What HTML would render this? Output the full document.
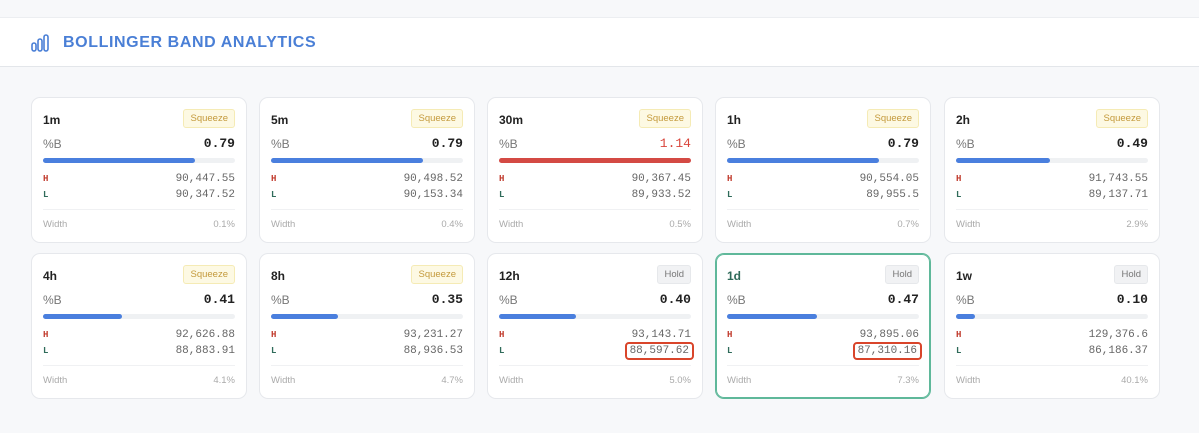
<!DOCTYPE html>
<html><head><meta charset="utf-8"><style>
*{box-sizing:border-box;margin:0;padding:0}
body{width:1199px;height:433px;background:#f7f8fa;font-family:"Liberation Sans",sans-serif;position:relative;overflow:hidden}
.hdr{position:absolute;left:0;top:17px;width:1199px;height:50px;background:#fff;border-top:1px solid #eceef1;border-bottom:1px solid #e3e6ea}
.hdr svg{position:absolute;left:31px;top:16px}
.hdr h1{position:absolute;left:63px;top:16px;font-size:16px;font-weight:bold;color:#4a7fd6;letter-spacing:0.6px}
.card{position:absolute;width:216px;height:146px;background:#fff;border:1px solid #e6e8ec;border-radius:9px}
.card.sel{border-color:#5fb89a;box-shadow:inset 0 0 0 1px #5fb89a}
.t{position:absolute;left:11px;top:15px;font-size:12px;font-weight:bold;color:#222}
.bd{position:absolute;right:11px;top:11px;height:19px;padding:0 6px;font-size:9.5px;line-height:18px;border-radius:3px}
.sq{background:#fdf9e3;border:1px solid #f5ebb5;color:#c49a3c}
.hd{background:#f1f2f4;border:1px solid #e6e8eb;color:#777}
.pb{position:absolute;left:11px;top:39px;font-size:12px;color:#777}
.pv{position:absolute;right:11px;top:38px;font-family:"Liberation Mono",monospace;font-weight:bold;font-size:13px;color:#222}
.tr{position:absolute;left:11px;right:11px;top:60px;height:5px;background:#eff1f3;border-radius:3px}
.tr i{display:block;height:5px;background:#4a7fde;border-radius:3px}
.lab{position:absolute;left:11px;font-family:"Liberation Mono",monospace;font-size:9px;font-weight:bold}
.val{position:absolute;right:11px;font-family:"Liberation Mono",monospace;font-size:11px;color:#666}
.box{border:2px solid #d9452b;border-radius:4px;padding:1px 3px;right:8px!important}
.dv{position:absolute;left:11px;right:11px;top:111px;border-top:1px solid #f0f1f3}
.w{position:absolute;left:11px;top:121px;font-size:9.5px;color:#aaa}
.wv{position:absolute;right:11px;top:121px;font-size:9.5px;color:#aaa}
</style></head><body>
<div class="hdr"><svg width="18" height="18" viewBox="0 0 18 18" fill="none" stroke="#4a7fd6" stroke-width="1.6"><rect x="1" y="9" width="4" height="8" rx="2"/><rect x="7" y="5" width="4" height="12" rx="2"/><rect x="13" y="1" width="4" height="16" rx="2"/></svg><h1>BOLLINGER BAND ANALYTICS</h1></div>
<div id="c"></div>
<script>
const d=[["1m","Squeeze","0.79",79,"90,447.55","90,347.52","0.1%"],["5m","Squeeze","0.79",79,"90,498.52","90,153.34","0.4%"],["30m","Squeeze","1.14",100,"90,367.45","89,933.52","0.5%"],["1h","Squeeze","0.79",79,"90,554.05","89,955.5","0.7%"],["2h","Squeeze","0.49",49,"91,743.55","89,137.71","2.9%"],
["4h","Squeeze","0.41",41,"92,626.88","88,883.91","4.1%"],["8h","Squeeze","0.35",35,"93,231.27","88,936.53","4.7%"],["12h","Hold","0.40",40,"93,143.71","88,597.62","5.0%"],["1d","Hold","0.47",47,"93,895.06","87,310.16","7.3%"],["1w","Hold","0.10",10,"129,376.6","86,186.37","40.1%"]];
const xs=[31,259,487,715,944];let h="";
d.forEach((r,i)=>{const x=xs[i%5],y=i<5?97:253,red=r[0]=="30m",sel=r[0]=="1d",bx=(r[0]=="12h"||sel);
h+=`<div class="card${sel?' sel':''}" style="left:${x}px;top:${y}px"><div class="t" style="${sel?'color:#2f6b5a':''}">${r[0]}</div><div class="bd ${r[1]=="Hold"?'hd':'sq'}">${r[1]}</div><div class="pb">%B</div><div class="pv" style="${red?'color:#d9453b;font-weight:normal':''}">${r[2]}</div><div class="tr"><i style="width:${r[3]}%;${red?'background:#d44a44':''}"></i></div><div class="lab" style="top:76px;color:#c0392b">H</div><div class="val" style="top:75px">${r[4]}</div><div class="lab" style="top:92px;color:#2f6b5a">L</div><div class="val${bx?' box':''}" style="top:${bx?88:91}px">${r[5]}</div><div class="dv"></div><div class="w">Width</div><div class="wv">${r[6]}</div></div>`});
document.getElementById("c").innerHTML=h;
</script>
</body></html>
